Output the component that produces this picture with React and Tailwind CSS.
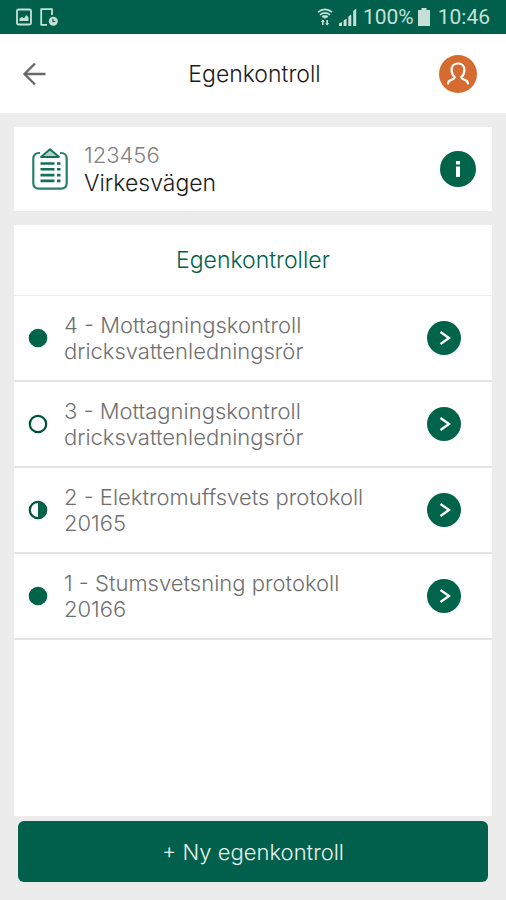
import React from "react";

const checks = [
  { id: 4, name: "Mottagningskontroll dricksvattenledningsrör", status: "done" },
  { id: 3, name: "Mottagningskontroll dricksvattenledningsrör", status: "empty" },
  { id: 2, name: "Elektromuffsvets protokoll 20165", status: "half" },
  { id: 1, name: "Stumsvetsning protokoll 20166", status: "done" },
];

function StatusBar() {
  return (
    <div className="flex h-[34px] shrink-0 items-center justify-between bg-[#00604b] px-4 text-[#c5e0d9]">
      <div className="flex items-center gap-2">
        <svg className="h-[18px] w-4" viewBox="0 0 16 18" fill="none">
          <rect x="1" y="1.5" width="14" height="15" rx="1.5" stroke="currentColor" strokeWidth="1.8" />
          <path d="M3.5 13V10.5L6 9l2 1.2L10.5 7l2 2.5V13z" fill="currentColor" />
        </svg>
        <svg className="h-[18px] w-[18px]" viewBox="0 0 18 18" fill="none">
          <path d="M12 7V1.2H1.2v15.6H7" stroke="currentColor" strokeWidth="1.8" strokeLinejoin="round" />
          <circle cx="13.3" cy="13.2" r="4.5" fill="currentColor" />
          <path d="M13 10.8v2.7h2.3" stroke="#00604b" strokeWidth="1.2" />
        </svg>
      </div>
      <div className="flex items-center font-[Roboto,sans-serif] text-[21px] leading-6 font-normal">
        <svg className="mr-1.5 h-[18px] w-4" viewBox="0 0 16 18" fill="none" stroke="currentColor">
          <path d="M1 4.2Q8-1.5 15 4.2M3 6.8q5-4 10 0M5.2 9.2q2.8-2.2 5.6 0" strokeWidth="1.7" />
          <path d="M8 10.500l-2.500-2.500h5z" fill="currentColor" />
          <path d="M5.8 17v-5M10.2 12v5" strokeWidth="1.6" />
          <path d="M3.8 14l2-2.5 2 2.5zM8.2 15l2 2.5 2-2.5z" fill="currentColor" stroke="none" />
        </svg>
        <svg className="mr-1.5 h-[18px] w-[18px]" viewBox="0 0 18 18" fill="currentColor">
          <path d="M0 18v-2.5L3 14v4zM4.600 12.500l3-2V18h-3zM9.300 8.500l3-2V18h-3zM14.200 3l3-2.500V18h-3z" />
        </svg>
        <span>100%</span>
        <svg className="ml-1 mr-2 h-[18px] w-3" viewBox="0 0 12 18" fill="currentColor">
          <path d="M3.5 0h5v2H12v16H0V2h3.5z" />
        </svg>
        <span>10:46</span>
      </div>
    </div>
  );
}

function Header() {
  return (
    <header className="flex h-[79px] shrink-0 items-center justify-between bg-white pl-[22px] pr-[29px]">
      <button aria-label="Tillbaka" className="flex w-12 items-center">
        <svg className="h-6 w-6" viewBox="0 0 24 24" fill="none" stroke="#686868" strokeWidth="2.3">
          <path d="M23.5 12H2.5M13 1.5L2.5 12 13 22.5" />
        </svg>
      </button>
      <h1 className="text-[23px] leading-[26px] text-[#1c1c1c]">Egenkontroll</h1>
      <button aria-label="Profil" className="flex h-[38px] w-[38px] items-center justify-center rounded-full bg-[#d66b31]">
        <svg className="h-6 w-6" viewBox="0 0 24 24" fill="none" stroke="#fff" strokeWidth="2.2" strokeLinecap="round" strokeLinejoin="round">
          <path d="M2 21.5c.3-2.300 1.600-3 3.600-3.700 2-.7 3.200-1.300 3.200-2.700C6.800 13.500 5.600 11 5.600 8c0-3.800 2.400-6.500 6.400-6.500s6.400 2.700 6.400 6.500c0 3-1.200 5.500-3.200 7.100 0 1.400 1.200 2 3.200 2.700 2 .7 3.300 1.400 3.600 3.700" />
        </svg>
      </button>
    </header>
  );
}

function ClipboardIcon() {
  return (
    <svg className="h-[42px] w-9 shrink-0" viewBox="0 0 36 42" fill="none" stroke="#29806a">
      <path d="M8 5H7C3.5 5 1.3 7 1.3 10.5V35c0 3.5 2.2 5.6 5.7 5.6h22c3.5 0 5.7-2.1 5.7-5.6V10.5C34.7 7 32.5 5 29 5h-1" strokeWidth="2.2" />
      <path d="M9 9L18 1.2 27 9z" fill="#b5d0c6" stroke="#147159" strokeWidth="1.8" strokeLinejoin="round" />
      <path d="M8.5 15.5h14M8.5 21.3h14M8.5 27.1h14M8.5 32.9h14M25 15.5h3.5M25 21.3h3.5M25 27.1h3.5M25 32.9h3.5" strokeWidth="2.6" stroke="#147159" />
    </svg>
  );
}

function StatusDot({ status }) {
  return (
    <svg className="h-5 w-5 shrink-0" viewBox="0 0 20 20" role="img" aria-label={status}>
      {status === "done" ? (
        <circle cx="10" cy="10" r="9.3" fill="#00644b" />
      ) : (
        <circle cx="10" cy="10" r="8.2" fill="#fff" stroke="#00523c" strokeWidth="2.2" />
      )}
      {status === "half" && <path d="M10 1.7a8.3 8.3 0 0 1 0 16.6z" fill="#00644b" />}
    </svg>
  );
}

function CheckRow({ check }) {
  return (
    <li className="flex h-[86px] items-center border-b-2 border-[#e3e3e3] pl-3.5 pr-[31px]">
      <StatusDot status={check.status} />
      <p className="ml-4 w-[320px] text-[22px] leading-[26px] text-[#707070]">
        {`${check.id} - ${check.name}`}
      </p>
      <button aria-label={`Öppna ${check.name}`} className="ml-auto flex h-[34px] w-[34px] shrink-0 items-center justify-center rounded-full bg-[#00644b]">
        <svg className="h-4 w-4" viewBox="0 0 16 16" fill="none" stroke="#fff" strokeWidth="2.3">
          <path d="M4.5 2l8.5 6-8.5 6" />
        </svg>
      </button>
    </li>
  );
}

export default function App() {
  return (
    <div className="flex min-h-screen flex-col bg-[#ececec] font-[Inter,sans-serif] font-light">
      <StatusBar />
      <Header />

      <main className="flex grow flex-col gap-3.5 px-3.5 pt-3.5">
        {/* Project */}
        <section className="flex h-[84px] items-center bg-white pl-[18px] pr-4">
          <ClipboardIcon />
          <div className="ml-4 leading-7">
            <p className="text-[22px] text-[#808080]">123456</p>
            <p className="text-[23px] text-[#1c1c1c]">Virkesvägen</p>
          </div>
          <button aria-label="Information" className="ml-auto flex h-9 w-9 items-center justify-center rounded-full bg-[#00644b]">
            <svg className="h-4 w-4" viewBox="0 0 16 16" fill="#fff">
              <path d="M6 0h4v3.5H6zM6 5.5h4V16H6z" />
            </svg>
          </button>
        </section>

        {/* List of checks */}
        <section className="grow bg-white">
          <h2 className="flex h-[71px] items-center justify-center border-b border-[#eeeeee] text-[23px] leading-[26px] text-[#00644b]">
            Egenkontroller
          </h2>
          <ul>
            {checks.map((check) => (
              <CheckRow key={check.id} check={check} />
            ))}
          </ul>
        </section>
      </main>

      <footer className="px-[18px] pb-[18px] pt-[5px]">
        <button className="h-[61px] w-full rounded-md bg-[#00604b] text-[22px] leading-[26px] text-[#e6f2ee]">
          + Ny egenkontroll
        </button>
      </footer>
    </div>
  );
}
